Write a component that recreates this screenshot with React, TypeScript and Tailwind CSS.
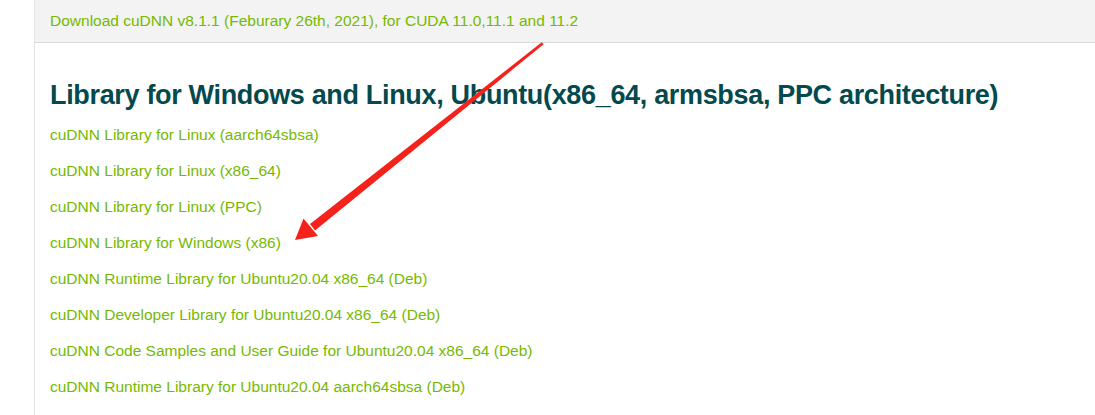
import React from 'react'

const links = [
  'cuDNN Library for Linux (aarch64sbsa)',
  'cuDNN Library for Linux (x86_64)',
  'cuDNN Library for Linux (PPC)',
  'cuDNN Library for Windows (x86)',
  'cuDNN Runtime Library for Ubuntu20.04 x86_64 (Deb)',
  'cuDNN Developer Library for Ubuntu20.04 x86_64 (Deb)',
  'cuDNN Code Samples and User Guide for Ubuntu20.04 x86_64 (Deb)',
  'cuDNN Runtime Library for Ubuntu20.04 aarch64sbsa (Deb)',
]

function Arrow() {
  // tapering red annotation arrow, drawn over the page
  return (
    <svg
      className="pointer-events-none absolute left-0 top-0"
      width="1095"
      height="415"
      viewBox="0 0 1095 415"
    >
      <polygon fill="#f5221b" points="541.8,42.3 543.6,44.3 315,230.5 310,224" />
      <polygon fill="#f5221b" points="295,240 303.5,218.5 318,236" />
    </svg>
  )
}

export default function App() {
  return (
    <div className="relative flex h-[415px] w-[1095px] overflow-hidden bg-white font-['Liberation_Sans',sans-serif]">
      <div className="w-[34px] shrink-0" />
      <main className="flex-1 border-l border-[#e2e2e2]">
        {/* version band */}
        <div className="flex h-[43px] items-center border-b border-[#dadada] bg-[#f3f3f3] pl-[15px]">
          <a className="text-[15.5px] text-[#76b900]">
            Download cuDNN v8.1.1 (Feburary 26th, 2021), for CUDA 11.0,11.1 and 11.2
          </a>
        </div>

        <section className="pl-[15px] pt-[34px]">
          <h2 className="text-[27px] font-semibold leading-[36px] tracking-[-0.33px] text-[#03494d]">
            Library for Windows and Linux, Ubuntu(x86_64, armsbsa, PPC architecture)
          </h2>
          <ul className="mt-[4px] flex flex-col">
            {links.map((l) => (
              <li key={l} className="flex h-[36px] items-center">
                <a className="text-[15.5px] text-[#76b900]">{l}</a>
              </li>
            ))}
          </ul>
        </section>
      </main>
      <Arrow />
    </div>
  )
}
